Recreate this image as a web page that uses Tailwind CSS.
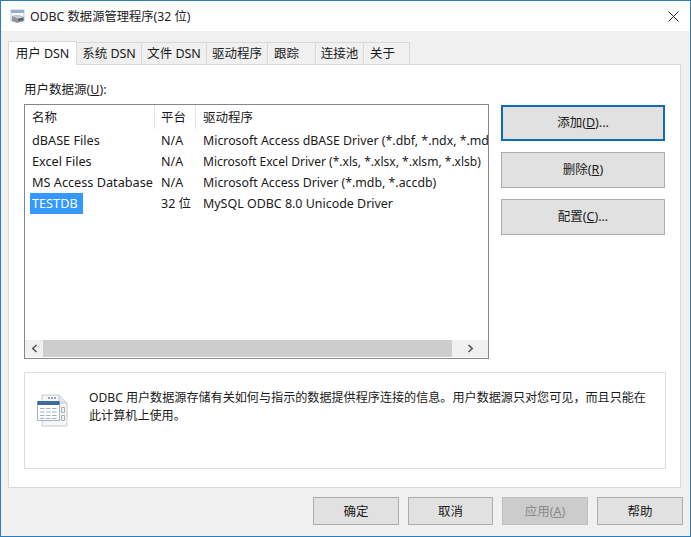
<!DOCTYPE html>
<html lang="zh-CN">
<head>
    <meta charset="UTF-8">
    <title>ODBC 数据源管理程序(32 位)</title>
    <script src="https://cdn.jsdelivr.net/npm/@tailwindcss/browser@4"></script>
</head>
<body class="bg-[#f0f0f0]">
<div class="w-[691px] h-[537px] flex flex-col overflow-hidden border border-[#2b7cb8] bg-[#f0f0f0] text-[12.5px] leading-[17px] text-[#1a1a1a] font-['Noto_Sans','Noto_Sans_CJK_SC',sans-serif]">
    <!-- title bar -->
    <div class="h-[30px] shrink-0 bg-white flex items-center pl-[9px] pr-[11px]">
        <svg class="w-[15px] h-[15px] mr-[5px]" viewBox="0 0 15 15">
            <rect x="1" y="1" width="13" height="11" fill="#f4f6f8" stroke="#c5cbd1"/>
            <rect x="1" y="1" width="13" height="3" fill="#8fb0d2"/>
            <path d="M2 7 L8 6 L14 8 L14 12 L7 14 L2 12 Z" fill="#8d979f"/>
            <path d="M2 7 L8 6 L14 8 L8 9.500 Z" fill="#c9cfd4"/>
            <path d="M8 10 L13 9 V11 L8 12 Z" fill="#4f5962"/>
        </svg>
        <span class="text-[12.3px] text-[#222]">ODBC 数据源管理程序(32 位)</span>
        <svg class="ml-auto w-[11px] h-[11px]" viewBox="0 0 11 11" fill="none" stroke="#222" stroke-width="1">
            <path d="M0.5 0.5 L10.5 10.5 M10.5 0.5 L0.5 10.5"/>
        </svg>
    </div>

    <!-- tabs -->
    <div class="h-[33px] shrink-0 flex items-end pl-[7px] relative z-10">
        <div class="w-[69px] h-[24px] -mb-px bg-white border border-b-0 border-[#d9d9d9] flex items-center justify-center text-[12.5px] pb-px">用户 DSN</div>
        <div class="w-[65px] h-[22px] border-r border-t border-[#d9d9d9] flex items-center justify-center">系统 DSN</div>
        <div class="w-[65px] h-[22px] border-r border-t border-[#d9d9d9] flex items-center justify-center">文件 DSN</div>
        <div class="w-[61px] h-[22px] border-r border-t border-[#d9d9d9] flex items-center justify-center">驱动程序</div>
        <div class="w-[48px] h-[22px] border-r border-t border-[#d9d9d9] flex items-center pl-[6px]">跟踪</div>
        <div class="w-[48px] h-[22px] border-r border-t border-[#d9d9d9] flex items-center justify-center">连接池</div>
        <div class="w-[46px] h-[22px] border-r border-t border-[#d9d9d9] flex items-center pl-[6px]">关于</div>
    </div>

    <!-- tab panel -->
    <div class="w-[673px] h-[424px] ml-[7px] shrink-0 bg-white border border-[#d9d9d9] pl-[15px] pt-[16px]">
        <div class="h-[23px]">用户数据源(<span class="underline">U</span>):</div>
        <div class="flex items-start">
            <!-- list -->
            <div class="w-[465px] h-[255px] border border-[#828790] flex flex-col overflow-hidden">
                <div class="h-[24px] shrink-0 flex items-center">
                    <div class="w-[130px] pl-[7px] h-full flex items-center border-r border-[#e5e5e5]">名称</div>
                    <div class="w-[41px] pl-[6px] h-full flex items-center border-r border-[#e5e5e5]">平台</div>
                    <div class="pl-[7px]">驱动程序</div>
                </div>
                <div class="flex-1 pt-[1px] overflow-hidden whitespace-nowrap">
                    <div class="h-[21px] flex items-center">
                        <div class="w-[130px] pl-[7px] shrink-0 text-[12.7px]">dBASE Files</div>
                        <div class="w-[41px] pl-[6px] shrink-0">N/A</div>
                        <div class="pl-[7px] text-[12.35px]">Microsoft Access dBASE Driver (*.dbf, *.ndx, *.mdx)</div>
                    </div>
                    <div class="h-[21px] flex items-center">
                        <div class="w-[130px] pl-[7px] shrink-0 text-[12.7px]">Excel Files</div>
                        <div class="w-[41px] pl-[6px] shrink-0">N/A</div>
                        <div class="pl-[7px] text-[12.05px]">Microsoft Excel Driver (*.xls, *.xlsx, *.xlsm, *.xlsb)</div>
                    </div>
                    <div class="h-[21px] flex items-center">
                        <div class="w-[130px] pl-[7px] shrink-0 text-[12.7px] whitespace-nowrap">MS Access Database</div>
                        <div class="w-[41px] pl-[6px] shrink-0">N/A</div>
                        <div class="pl-[7px] text-[12.35px]">Microsoft Access Driver (*.mdb, *.accdb)</div>
                    </div>
                    <div class="h-[21px] flex items-center">
                        <div class="w-[130px] pl-[5px] shrink-0"><span class="inline-flex items-center h-[21px] w-[53px] pl-[2px] bg-[#3399ff] text-white text-[12.7px]">TESTDB</span></div>
                        <div class="w-[41px] pl-[6px] shrink-0">32 位</div>
                        <div class="pl-[7px] text-[12.45px]">MySQL ODBC 8.0 Unicode Driver</div>
                    </div>
                </div>
                <!-- scrollbar -->
                <div class="h-[17px] mb-px shrink-0 flex bg-[#f0f0f0]">
                    <div class="w-[18px] flex items-center justify-center">
                        <svg class="w-[7px] h-[9px]" viewBox="0 0 7 9" fill="none" stroke="#555" stroke-width="1.6"><path d="M5.5 1 L1.8 4.5 L5.5 8"/></svg>
                    </div>
                    <div class="w-[409px] bg-[#cdcdcd]"></div>
                    <div class="flex-1 flex items-center justify-center">
                        <svg class="w-[7px] h-[9px]" viewBox="0 0 7 9" fill="none" stroke="#555" stroke-width="1.6"><path d="M1.5 1 L5.2 4.5 L1.5 8"/></svg>
                    </div>
                </div>
            </div>
            <!-- side buttons -->
            <div class="ml-[12px] w-[164px] flex flex-col gap-[11px] pt-px">
                <div class="h-[36px] bg-[#e1e1e1] border-2 border-[#0f6cb0] flex items-center justify-center pb-[2px]">添加(<span class="underline">D</span>)...</div>
                <div class="h-[36px] bg-[#e1e1e1] border border-[#adadad] flex items-center justify-center pb-[2px]">删除(<span class="underline">R</span>)</div>
                <div class="h-[36px] bg-[#e1e1e1] border border-[#adadad] flex items-center justify-center pb-[2px]">配置(<span class="underline">C</span>)...</div>
            </div>
        </div>
        <!-- info box -->
        <div class="w-[642px] h-[97px] mt-[13px] border border-[#dcdcdc] flex pl-[12px] pt-[17px]">
            <svg class="w-[32px] h-[34px] shrink-0 mt-[4px]" viewBox="0 0 32 34">
                <path d="M5 1 H22 L30 9 V32 H5 Z" fill="#f5f6f8" stroke="#c6cbd1"/>
                <path d="M22 1 V9 H30" fill="#e2e5e9" stroke="#c6cbd1"/>
                <path d="M11 4 H19" stroke="#9aa3ad" stroke-width="2" stroke-dasharray="2 1"/>
                <rect x="0.500" y="7.500" width="22" height="19" fill="#fff" stroke="#a7b3c2"/>
                <rect x="0.500" y="7" width="22" height="4" fill="#3f6a9e"/>
                <path d="M3 14.500 H20 M3 18 H20 M3 21.500 H20 M3 24.500 H20" stroke="#9db0c6" stroke-width="1.200" stroke-dasharray="4.500 1.500"/>
                <path d="M24.500 13.500 h3 v5 h-3 z M24.500 21.500 h3 v5 h-3 z" fill="none" stroke="#a5adb7"/>
            </svg>
            <p class="ml-[20px] w-[562px] -mt-[1px] leading-[18px] text-[12.1px]">ODBC 用户数据源存储有关如何与指示的数据提供程序连接的信息。用户数据源只对您可见，而且只能在此计算机上使用。</p>
        </div>
    </div>

    <!-- bottom buttons -->
    <div class="flex-1 flex items-start justify-end pt-[9px] pr-[7px] gap-[9px]">
        <div class="w-[86px] h-[28px] bg-[#e1e1e1] border border-[#adadad] flex items-center justify-center">确定</div>
        <div class="w-[85px] h-[28px] bg-[#e1e1e1] border border-[#adadad] flex items-center justify-center">取消</div>
        <div class="w-[86px] h-[28px] bg-[#cccccc] border border-[#bfbfbf] flex items-center justify-center text-[#8a8a8a]">应用(<span class="underline">A</span>)</div>
        <div class="w-[86px] h-[28px] bg-[#e1e1e1] border border-[#adadad] flex items-center justify-center">帮助</div>
    </div>
</div>
</body>
</html>
